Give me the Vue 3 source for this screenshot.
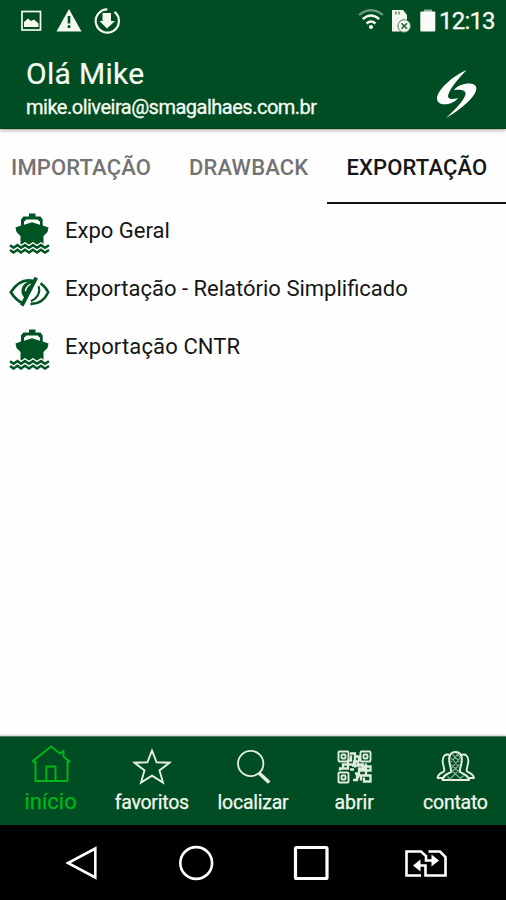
<script setup>
const tabs = [
  { label: 'IMPORTAÇÃO', cls: 'tab-import' },
  { label: 'DRAWBACK', cls: 'tab-drawback' },
  { label: 'EXPORTAÇÃO', cls: 'tab-export active' }
]
const rows = [
  { label: 'Expo Geral', icon: 'ship', cls: 'r1' },
  { label: 'Exportação - Relatório Simplificado', icon: 'eye', cls: 'r2' },
  { label: 'Exportação CNTR', icon: 'ship', cls: 'r3' }
]
</script>

<template>
  <div class="screen">
    <header class="top">
      <div class="status">
        <svg class="st-left" width="130" height="42" viewBox="0 0 130 42">
          <rect x="22" y="11.500" width="18.500" height="18.500" fill="none" stroke="#f3f8ee" stroke-width="1.700" />
          <path d="M24 27V22L28 18.500L31 21L34 19.500L38.500 23.500V27Z" fill="#f3f8ee" />
          <path d="M69 9L81.500 31.500H56.500Z" fill="#f3f8ee" />
          <path d="M69 16V23.500M69 25.300V28" stroke="#004d24" stroke-width="2.600" />
          <path d="M114.500 11.900A11.600 11.600 0 1 1 107.300 9.400" fill="none" stroke="#f3f8ee" stroke-width="2.200" />
          <path d="M102.500 13H111V21H115L107 28.500L99.500 21H102.500Z" fill="#f3f8ee" />
        </svg>
        <div class="st-right">
          <svg width="80" height="42" viewBox="0 0 80 42">
            <g fill="none" stroke-width="2.400">
              <path d="M1 15Q13 5.500 25 15" stroke="#6a9a7d" stroke-width="2.200" />
              <path d="M4.800 19.200Q13 12 21.200 19.200" stroke="#f3f8ee" />
              <path d="M8.500 23.500Q13 19.300 17.500 23.500" stroke="#f3f8ee" />
            </g>
            <circle cx="13" cy="27" r="2.100" fill="#f3f8ee" />
            <path d="M34 10H45L49 15V31.500H34Z" fill="#f3f8ee" />
            <path d="M37 13H42" stroke="#7fa68e" stroke-width="3" stroke-dasharray="2 1" />
            <circle cx="46.200" cy="26" r="6.300" fill="#f3f8ee" stroke="#43775a" stroke-width="1" />
            <path d="M43.500 23.300L49 28.800M49 23.300L43.500 28.800" stroke="#1b5c38" stroke-width="1.500" />
            <path d="M66 9.500H74V12H66Z" fill="#8bae98" />
            <rect x="62.300" y="11.500" width="15" height="20" rx="1" fill="#f8fbf6" />
          </svg>
          <span class="clock">12:13</span>
        </div>
      </div>
      <div class="user">
        <div class="who">
          <div class="hello">Olá Mike</div>
          <div class="mail">mike.oliveira@smagalhaes.com.br</div>
        </div>
        <svg class="logo" width="42" height="50" viewBox="0 0 42 50">
          <path d="M30.500 1C17 7 2 20 1 29C.7 34.500 6 36 12 35C17 34 20.500 31.500 22 29C17 30.500 11.500 30.500 12 27C13 20.500 23 9 30.500 1Z" fill="#fff" />
          <path d="M18 21C23 14 39 12 40.300 18.500C41.500 27 24 41 9.500 49.500C18 42 28.500 31 29.500 25.500C30 20.500 24 20.500 18 21Z" fill="#fff" />
        </svg>
      </div>
    </header>

    <nav class="tabs">
      <div v-for="t in tabs" :key="t.label" class="tab" :class="t.cls"><span>{{ t.label }}</span></div>
    </nav>

    <main class="list">
      <div v-for="r in rows" :key="r.label" class="row">
        <svg v-if="r.icon === 'ship'" width="42" height="42" viewBox="0 0 42 42">
          <path d="M20 1.500H26.500V4.500H31.500L33.700 7.500V13.500L39.500 15.500L38.500 20L34.500 24V34H11.500V24L7.500 20L6.500 15.500L12 13.500V7.500L14.300 4.500H20Z" fill="#005424" />
          <path d="M15 12.800V9.800L17.500 7.500H28.500L31 9.800V12.800L23 10.300Z" fill="#fff" />
          <path d="M1 32.600L4.500 35.100L8.500 32.400L12 35.100L16 32.400L20 35.100L24 32.400L28 35.100L32 32.400L36 35.100L40 32.600V41H1Z" fill="#fff" />
          <path d="M1 31.200L4.500 33.700L8.500 31L12 33.700L16 31L20 33.700L24 31L28 33.700L32 31L36 33.700L40 31.200" fill="none" stroke="#fff" stroke-width="1.800" />
          <path d="M1 33.300L4.500 35.800L8.500 33.100L12 35.800L16 33.100L20 35.800L24 33.100L28 35.800L32 33.100L36 35.800L40 33.300M1 38L4.500 40.500L8.500 37.800L12 40.500L16 37.800L20 40.500L24 37.800L28 40.500L32 37.800L36 40.500L40 38" fill="none" stroke="#005424" stroke-width="2.500" />
        </svg>
        <svg v-else width="42" height="42" viewBox="0 0 42 42">
          <g transform="translate(0 1.700)">
            <path d="M24.500 9.300C14.500 6.800 7 12.500 1.800 20.500C4.800 25 8.500 29.500 13.500 31.300" fill="none" stroke="#005424" stroke-width="2.700" />
            <path d="M31.500 11.500Q37 15.500 39.200 20.500C35.500 28.500 29.500 32.500 21.500 32.200" fill="none" stroke="#005424" stroke-width="2.600" />
            <path d="M25 9C16 9.500 12 14 12.500 20.500C13 24 15 26 17.500 27Z" fill="#005424" />
            <path d="M22 12.500Q17 14.500 16.500 19.500" fill="none" stroke="#fff" stroke-width="1.400" />
            <path d="M12.800 34L27.300 6" fill="none" stroke="#005424" stroke-width="3.800" />
            <path d="M29.500 14.500C32 20.500 28.500 26.500 22 29.500" fill="none" stroke="#005424" stroke-width="2" />
          </g>
        </svg>
        <span :class="r.cls">{{ r.label }}</span>
      </div>
    </main>

    <footer class="bottom">
      <div class="item on">
        <svg width="42" height="42" viewBox="0 0 42 42" fill="none" stroke="#00b51b" stroke-width="1.900" stroke-linejoin="round">
          <path d="M2.800 21L21 6.500L30 13.500L33.500 10.800V16.500L39.500 21.500L38 22.500L37.500 21.500V41H5.500V21.500L4.500 22.500Z" />
          <path d="M16.300 41V26.500H25.500V41" />
        </svg>
        <span class="b1">início</span>
      </div>
      <div class="item">
        <svg width="42" height="42" viewBox="0 0 42 42" fill="none" stroke="#e6f0e0" stroke-width="1.900">
          <path d="M21 10.500L25.600 22.300L38.500 22.700L28.500 30.400L32 42.500L21 35.600L10 42.500L13.500 30.400L3.500 22.700L16.400 22.300Z" />
        </svg>
        <span class="b2">favoritos</span>
      </div>
      <div class="item">
        <svg width="42" height="42" viewBox="0 0 42 42" fill="none" stroke="#e6f0e0">
          <circle cx="18.700" cy="23.500" r="12.700" stroke-width="1.800" />
          <path d="M27 33L37.200 42.500" stroke-width="3.600" />
        </svg>
        <span class="b3">localizar</span>
      </div>
      <div class="item">
        <svg width="42" height="42" viewBox="0 0 42 42" fill="none" stroke="#dfebdc" stroke-width="1.900">
          <g transform="translate(0 1.500)">
            <rect x="5.500" y="10" width="10" height="10" rx="1" /><rect x="8.500" y="13" width="4" height="4" rx="1" />
            <rect x="27.500" y="10" width="10" height="10" rx="1" /><rect x="30.500" y="13" width="4" height="4" rx="1" />
            <rect x="5.500" y="31" width="10" height="10" rx="1" /><rect x="8.500" y="34" width="4" height="4" rx="1" />
            <path d="M17 12H22V15H26V20M18 14V19H15V23H10V27H7V29M11 27H15V23H21V20H25V23H30V27H26V29H32V25H37.500V29H34M22 15V26M17 28H21M33 22V34H26V29M20 38.500H24V36H26M24 36V32H22M28 39V34M31 34H37.500V40H31V36M19 24H29" stroke-width="2.300" />
          </g>
        </svg>
        <span class="b4">abrir</span>
      </div>
      <div class="item">
        <svg width="42" height="42" viewBox="0 0 42 42" fill="none" stroke="#e6f0e0" stroke-width="1.900" stroke-linejoin="round">
          <g transform="translate(0.500 2.500)">
            <path d="M16 13C11 10 7.500 14 8.300 20C8.700 24 10.500 26 9.500 29C6 31 3.500 31.500 3 35.500H8M26 13C31 10 34.500 14 33.700 20C33.300 24 31.500 26 32.500 29C36 31 39 31.500 39.500 35.500H34" />
            <path d="M21 9.500C15.500 9.500 14 14 15 20C15.300 24 17 25 16.500 29.500C12 32 8.500 33 8 37.500H34.500C34 33 30 32 25.500 29.500C25 25 26.700 24 27 20C28 14 26.500 9.500 21 9.500Z" stroke-width="2" />
            <path d="M18 12L25 19M22 11L26 15M16 15L25 25M24 11L16 20M26 15L17 26M25 22L18 29M17 22L25 30M17 28L26 36M24 28L16 36M13 34L16 37M29 33L26 36" stroke="#8bb198" stroke-width="1.100" />
          </g>
        </svg>
        <span class="b5">contato</span>
      </div>
    </footer>

    <div class="sysnav">
      <svg width="506" height="75" viewBox="0 0 506 75" fill="none" stroke="#fff" stroke-width="2.600">
        <path d="M95.300 23.500V52.500L68 38Z" />
        <circle cx="196.200" cy="38" r="15.900" />
        <rect x="295.500" y="22.500" width="31.500" height="31" rx="1" stroke-width="3.200" />
        <path d="M421 50.500H406.500V26.500H421L426 31V35.500H434M428.500 26.500H440L445.500 32V50.500H425.500V40.500H418" stroke-width="2.600" />
        <path d="M431.500 29.500L439 35.500L431.500 41.500ZM420.500 34.500L413 40.500L420.500 46.500Z" fill="#fff" stroke="none" />
      </svg>
    </div>
  </div>
</template>

<style>
body {
  margin: 0;
  background: #fff;
}
</style>

<style scoped>
.screen {
  width: 506px;
  height: 900px;
  display: flex;
  flex-direction: column;
  overflow: hidden;
  background: #fefefe;
  color: #161616;
  font-family: Roboto, "Liberation Sans", sans-serif;
  white-space: nowrap;
}
.screen svg {
  display: block;
  flex: none;
}
.top {
  height: 129px;
  box-sizing: border-box;
  border-bottom: 1px solid #003e13;
  background: #004d24;
  color: #f7fbf3;
  box-shadow: 0 1px 4px #999;
  flex: none;
}
.status {
  height: 42px;
  display: flex;
  justify-content: space-between;
}
.st-right {
  width: 148px;
  display: flex;
}
.clock {
  font-size: 24px;
  line-height: 43px;
  letter-spacing: -0.8px;
  margin-left: 1px;
  -webkit-text-stroke: 0.3px;
}
.user {
  display: flex;
  justify-content: space-between;
  padding: 14px 28px 0 26px;
}
.hello {
  font-size: 30px;
  line-height: 36px;
  letter-spacing: 0.3px;
  -webkit-text-stroke: 0.2px;
}
.mail {
  font-size: 20px;
  line-height: 31px;
  letter-spacing: -0.5px;
  -webkit-text-stroke: 0.3px;
}
.logo {
  margin-top: 13px;
}
.tabs {
  height: 76px;
  display: flex;
  flex: none;
}
.tab {
  box-sizing: border-box;
  height: 75px;
  line-height: 78px;
  font-size: 22px;
  font-weight: 500;
  letter-spacing: 0.15px;
  color: #737373;
}
.tab-import {
  width: 170px;
  padding-left: 11px;
}
.tab-drawback {
  width: 157px;
  padding-left: 19px;
}
.tab-export {
  width: 179px;
  padding-left: 19.5px;
}
.active {
  color: #161616;
  border-bottom: 2px solid #101418;
}
.list {
  flex: 1;
  padding: 7px 9px;
}
.row {
  height: 58px;
  display: flex;
  gap: 14px;
  font-size: 22px;
  line-height: 37px;
}
.r3 {
  letter-spacing: 0.13px;
}
.bottom {
  height: 89px;
  box-sizing: border-box;
  border-top: 1px solid #527b5b;
  display: grid;
  grid-template-columns: repeat(5, 1fr);
  background: #004d24;
  color: #f3f8ee;
  box-shadow: 0 -1px 2px #ccc;
}
.item {
  display: flex;
  flex-direction: column;
  align-items: center;
  padding-top: 3px;
  font-size: 19.5px;
  line-height: 42px;
  letter-spacing: -0.25px;
  -webkit-text-stroke: 0.25px;
}
.item svg {
  overflow: visible;
}
.b4 {
  letter-spacing: 0;
}
.on {
  color: #00b51b;
  font-size: 22px;
  line-height: 39px;
  letter-spacing: 0;
}
.sysnav {
  height: 75px;
  background: #000;
  flex: none;
}
</style>
